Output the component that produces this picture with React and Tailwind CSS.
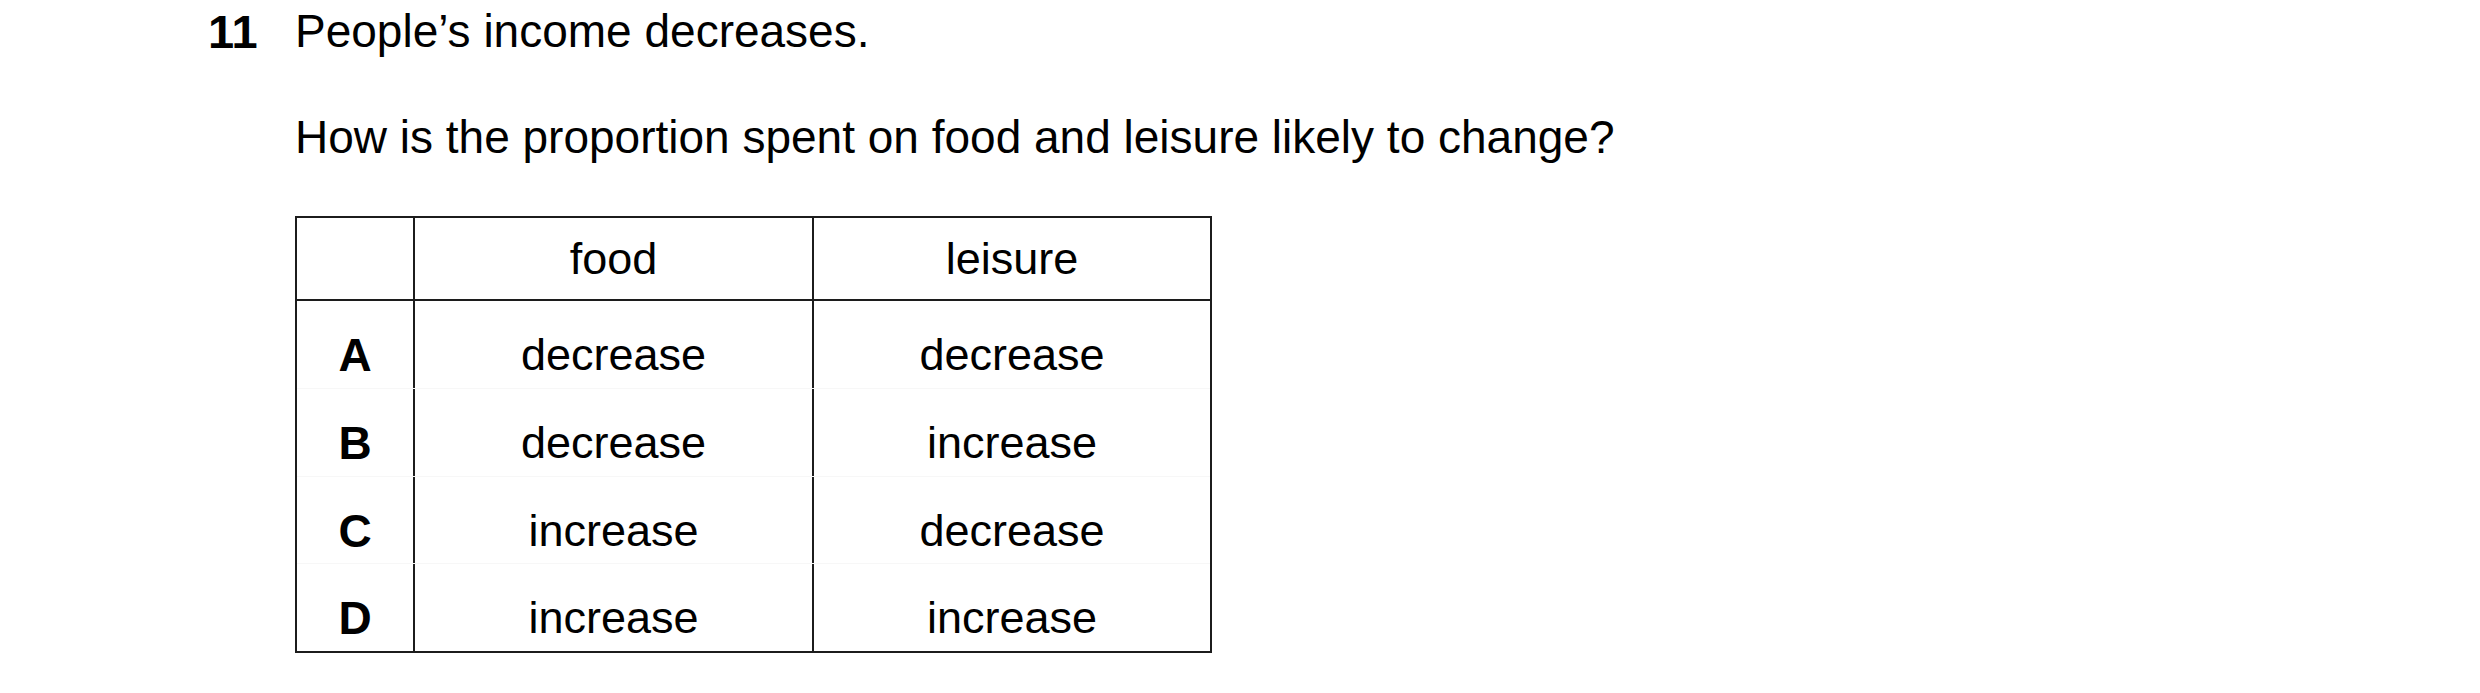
export default function App() {
  const rows = [
    ["A", "decrease", "decrease"],
    ["B", "decrease", "increase"],
    ["C", "increase", "decrease"],
    ["D", "increase", "increase"],
  ];
  return (
    <div className="w-[2480px] h-[693px] bg-white text-black font-['Liberation_Sans',Arial,sans-serif] pl-[208px] pt-[8px]">
      <div className="flex text-[46px] leading-none">
        <div className="w-[87px] font-bold text-[47px]">11</div>
        <div>People’s income decreases.</div>
      </div>
      <div className="pl-[87px]">
        <div className="mt-[59px] text-[46px] leading-none">
          How is the proportion spent on food and leisure likely to change?
        </div>
        <div className="mt-[56px] w-[917px] border-2 border-[#1c1c1c] text-[45px] leading-none">
          <div className="flex h-[83px] border-b-2 border-[#1c1c1c]">
            <div className="w-[118px] border-r-2 border-[#1c1c1c]"></div>
            <div className="w-[399px] border-r-2 border-[#1c1c1c] flex items-center justify-center">food</div>
            <div className="flex-1 flex items-center justify-center">leisure</div>
          </div>
          <div className="flex flex-col h-[350px]">
            {rows.map((r, i) => (
              <div key={r[0]} className={"flex flex-1 " + (i > 0 ? "border-t border-[#f7f7f7]" : "")}>
                <div className="w-[118px] border-r-2 border-[#1c1c1c] flex justify-center pt-[31px] font-bold text-[46px]">{r[0]}</div>
                <div className="w-[399px] border-r-2 border-[#1c1c1c] flex justify-center pt-[31px]">{r[1]}</div>
                <div className="flex-1 flex justify-center pt-[31px]">{r[2]}</div>
              </div>
            ))}
          </div>
        </div>
      </div>
    </div>
  );
}
